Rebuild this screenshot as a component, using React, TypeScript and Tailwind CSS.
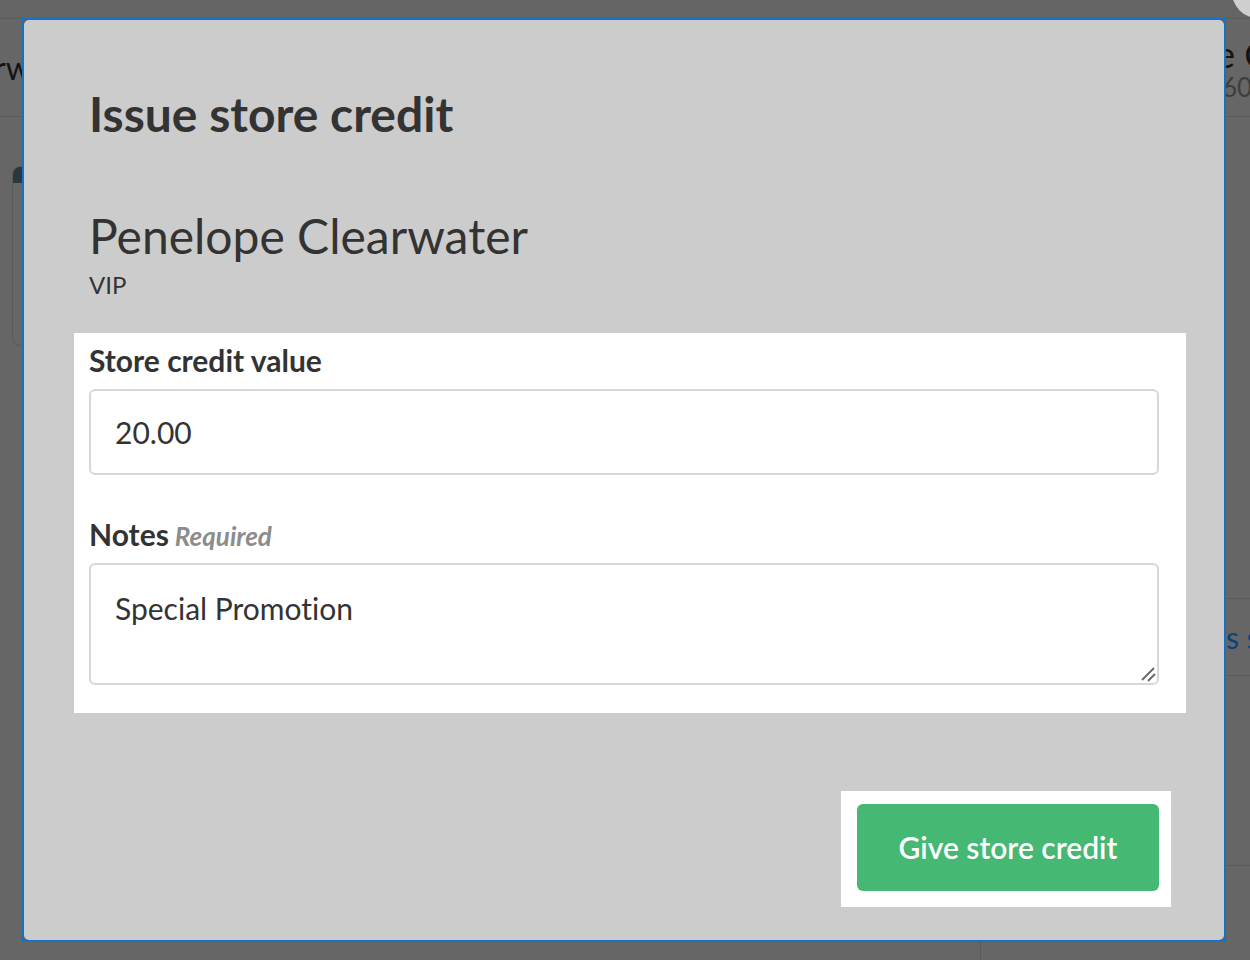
import React from 'react';

// Issue store credit dialog, shown over a dimmed customer page.

function BackgroundPage() {
  return (
    <div className="flex h-full flex-col">
      {/* top bar */}
      <div className="flex h-[19px] shrink-0 justify-end border-b border-[#5b5b5b] bg-[#646464]">
        <span className="mr-[-40px] mt-[-34px] h-[52px] w-[58px] rounded-full bg-[#cfcfcf]" />
      </div>

      {/* header */}
      <div className="flex h-[98px] shrink-0 items-center justify-between border-b border-[#5b5b5b]">
        <span className="ml-[-6px] text-[32px] leading-none text-[#141414]">rwater</span>
        <div className="flex w-[28px] flex-col leading-none">
          <span className="ml-[-6px] whitespace-nowrap text-[36px] text-[#141414]">e Cr</span>
          <span className="mt-[2px] whitespace-nowrap text-[26px] text-[#3e3e3e]">60.00</span>
        </div>
      </div>

      {/* body */}
      <div className="flex flex-1">
        <div className="flex-1 pl-[12px] pt-[49px]">
          <div className="h-[180px] w-[600px] overflow-hidden rounded-[8px] border border-[#5a5a5a]">
            <div className="h-[16px] bg-[#27383e]" />
          </div>
        </div>
        <div className="flex w-[270px] flex-col">
          <div className="mt-[481px] flex h-[78px] items-center border-y border-[#5b5b5b] pl-[246px]">
            <span className="whitespace-nowrap text-[30px] text-[#0b4378]">s s</span>
          </div>
          <div className="mt-[189px] flex-1 border-l border-t border-[#5b5b5b]" />
        </div>
      </div>
    </div>
  );
}

function Field({ label, extra, children }: { label: string; extra?: string; children: React.ReactNode }) {
  return (
    <div>
      <p className="h-[36px] text-[30px] font-bold leading-[36px] text-[#333]">
        {label}
        {extra && <span className="ml-[6px] text-[26px] italic leading-[0] text-[#8c8c8c]">{extra}</span>}
      </p>
      <div className="mt-[11px]">{children}</div>
    </div>
  );
}

export default function App() {
  return (
    <div className="relative h-[960px] w-[1250px] overflow-hidden bg-[#666666] font-['Lato',sans-serif]">
      <BackgroundPage />

      {/* Dialog */}
      <div className="absolute left-[22px] top-[18px] h-[924px] w-[1204px] border-2 border-[#1670c4] bg-[#5f5f5f]">
        <div className="flex h-full flex-col rounded-[5px] bg-[#cccccc] px-[65px] pt-[65px]">
          <h1 className="text-[48px] font-bold leading-[58px] text-[#333]">Issue store credit</h1>

          <h2 className="mt-[64px] text-[48px] leading-[58px] text-[#333]">Penelope Clearwater</h2>
          <p className="mt-[5px] text-[24px] leading-[30px] text-[#333]">VIP</p>

          <div className="mt-[33px] ml-[-15px] mr-[-27px] flex flex-col gap-[41px] bg-white pb-[28px] pl-[15px] pr-[27px] pt-[9px]">
            <Field label="Store credit value">
              <div className="flex h-[86px] items-center rounded-[6px] border-2 border-[#d7d7d7] bg-white pl-[24px] text-[30px] text-[#333]">
                20.00
              </div>
            </Field>
            <Field label="Notes" extra="Required">
              <div className="relative">
                <textarea
                  readOnly
                  defaultValue="Special Promotion"
                  className="block h-[122px] w-full resize-none rounded-[6px] border-2 border-[#d7d7d7] bg-white px-[24px] pt-[25px] text-[30px] leading-[36px] text-[#333] outline-none [font-variant-ligatures:none]"
                />
                {/* resize grip */}
                <svg
                  className="pointer-events-none absolute bottom-[3px] right-[3px]"
                  width="16"
                  height="16"
                  viewBox="0 0 16 16"
                  fill="none"
                  stroke="#6a6a6a"
                  strokeWidth="2"
                >
                  <path d="M2 14L14 2" />
                  <path d="M8 15L15 8" />
                </svg>
              </div>
            </Field>
          </div>

          <div className="mt-[78px] flex justify-end">
            <div className="mr-[-12px] bg-white pb-[16px] pl-[16px] pr-[12px] pt-[13px]">
              <button
                type="button"
                className="flex h-[87px] w-[302px] items-center justify-center rounded-[6px] bg-[#45b873] text-[30px] font-semibold text-white"
              >
                Give store credit
              </button>
            </div>
          </div>
        </div>
      </div>
    </div>
  );
}
